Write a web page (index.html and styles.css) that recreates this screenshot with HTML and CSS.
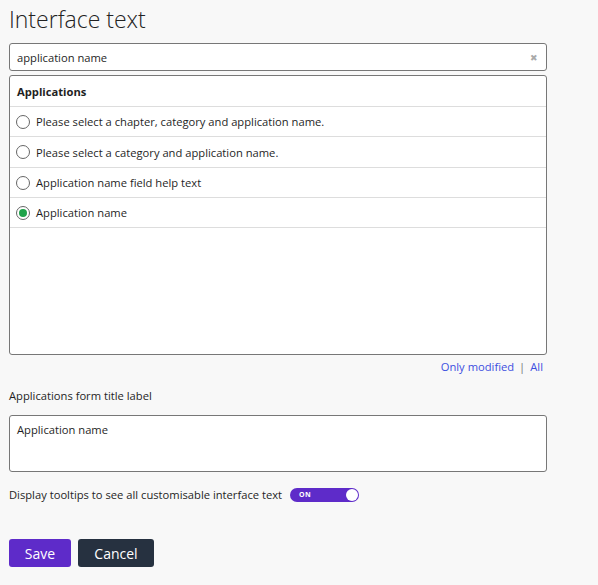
FILE: index.html
```html
<!DOCTYPE html>
<html lang="en">
<head>
<meta charset="utf-8">
<title>Interface text</title>
<link rel="stylesheet" href="styles.css">
</head>
<body>
<div class="page">
  <h1 class="title">Interface text</h1>
  <div class="search">
    <span class="search-text">application name</span>
    <span class="clear">&#x2716;</span>
  </div>
  <div class="listbox">
    <div class="list-head">Applications</div>
    <label class="row"><span class="radio"></span>Please select a chapter, category and application name.</label>
    <label class="row tall"><span class="radio"></span>Please select a category and application name.</label>
    <label class="row"><span class="radio"></span>Application name field help text</label>
    <label class="row"><span class="radio checked"></span>Application name</label>
  </div>
  <div class="filters"><a class="link">Only modified</a><span class="sep">|</span><a class="link">All</a></div>
  <div class="field-label">Applications form title label</div>
  <div class="textarea">Application name</div>
  <div class="tooltip-row">
    <span>Display tooltips to see all customisable interface text</span>
    <span class="toggle"><span class="toggle-on">ON</span><span class="knob"></span></span>
  </div>
  <div class="actions">
    <button class="btn btn-save">Save</button>
    <button class="btn btn-cancel">Cancel</button>
  </div>
</div>
</body>
</html>
```

FILE: styles.css
```css
html, body {
  margin: 0;
  padding: 0;
  background: #f8f8f8;
}
body {
  font-family: "Open Sans", "Noto Sans", sans-serif;
  color: #1f1f1f;
  font-size: 11.2px;
}
.page {
  padding: 0 51px 0 9px;
  display: flex;
  flex-direction: column;
}
.title {
  margin: 0;
  font-weight: 300;
  font-size: 23px;
  line-height: 32px;
  padding-top: 3px;
  color: #222;
}
.search {
  margin-top: 8px;
  height: 28px;
  box-sizing: border-box;
  border: 1px solid #777;
  border-radius: 3px;
  background: #fff;
  display: flex;
  align-items: center;
  justify-content: space-between;
  padding: 0 8px 0 7px;
}
.clear {
  font-size: 9px;
  color: #aaa;
}
.listbox {
  margin-top: 4px;
  height: 280px;
  box-sizing: border-box;
  border: 1px solid #777;
  border-radius: 3px;
  background: #fff;
  display: flex;
  flex-direction: column;
}
.list-head {
  height: 31px;
  box-sizing: border-box;
  border-bottom: 1px solid #ddd;
  font-weight: 700;
  display: flex;
  align-items: center;
  padding-left: 7px;
  padding-top: 1px;
}
.row {
  height: 30px;
  box-sizing: border-box;
  border-bottom: 1px solid #ddd;
  display: flex;
  align-items: center;
  padding-left: 6px;
  gap: 6px;
}
.row.tall {
  height: 31px;
}
.radio {
  width: 14px;
  height: 14px;
  box-sizing: border-box;
  border: 1px solid #666;
  border-radius: 50%;
  background: #fff;
  display: inline-flex;
  align-items: center;
  justify-content: center;
}
.radio.checked::after {
  content: "";
  width: 8px;
  height: 8px;
  border-radius: 50%;
  background: #1fa34a;
}
.filters {
  display: flex;
  justify-content: flex-end;
  align-items: center;
  gap: 5px;
  margin-top: 3px;
  padding-right: 4px;
  height: 17px;
}
.link {
  color: #3c4fe0;
}
.sep {
  color: #777;
}
.field-label {
  margin-top: 12px;
  height: 17px;
  line-height: 17px;
}
.textarea {
  margin-top: 11px;
  height: 57px;
  box-sizing: border-box;
  border: 1px solid #777;
  border-radius: 3px;
  background: #fff;
  padding: 5px 7px;
  line-height: 17px;
}
.tooltip-row {
  margin-top: 14px;
  display: flex;
  align-items: center;
  gap: 8px;
  height: 17px;
}
.toggle {
  width: 69px;
  height: 14px;
  border-radius: 7px;
  background: #5e2bc9;
  display: inline-flex;
  align-items: center;
  justify-content: space-between;
  padding: 0 1px 0 9px;
  box-sizing: border-box;
}
.toggle-on {
  color: #fff;
  font-size: 7px;
  font-weight: 700;
  letter-spacing: 0.3px;
}
.knob {
  width: 12px;
  height: 12px;
  border-radius: 50%;
  background: #fff;
}
.actions {
  margin-top: 36px;
  display: flex;
  gap: 7px;
}
.btn {
  font-family: "Open Sans", "Noto Sans", sans-serif;
  font-size: 14px;
  height: 28px;
  border: none;
  border-radius: 3px;
  color: #fff;
  padding: 0;
}
.btn-save {
  width: 62px;
  background: #5e2bc9;
}
.btn-cancel {
  width: 76px;
  background: #263140;
}
```
